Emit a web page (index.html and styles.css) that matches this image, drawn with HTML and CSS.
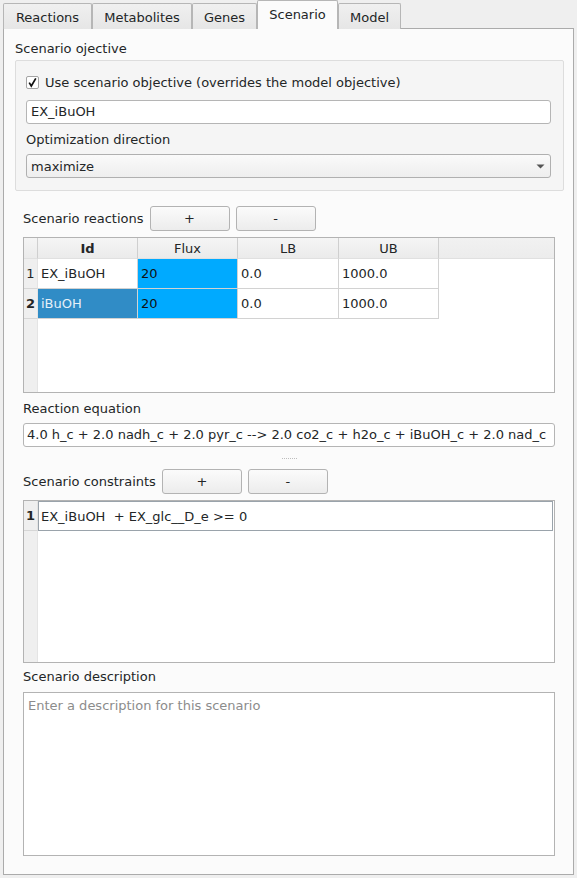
FILE: index.html
```html
<!DOCTYPE html>
<html>
<head>
<meta charset="utf-8">
<link rel="stylesheet" href="styles.css">
</head>
<body>
<div class="tabs">
  <div class="tab w-react">Reactions</div>
  <div class="tab w-meta">Metabolites</div>
  <div class="tab w-genes">Genes</div>
  <div class="tab tab-sel w-scen">Scenario</div>
  <div class="tab w-model">Model</div>
</div>
<div class="panel">
  <div class="gtitle">Scenario ojective</div>
  <div class="group">
    <div class="check">
      <span class="box"><svg width="11" height="11" viewBox="0 0 11 11"><path d="M2.2 5.6 L4.3 9 L8.8 1.4" fill="none" stroke="#111" stroke-width="1.7" stroke-linejoin="miter"/></svg></span>
      <span>Use scenario objective (overrides the model objective)</span>
    </div>
    <div class="input">EX_iBuOH</div>
    <div class="label">Optimization direction</div>
    <div class="combo"><span>maximize</span><svg width="9" height="5" viewBox="0 0 9 5"><path d="M0.5 0.5 H8.5 L4.5 4.5 Z" fill="#555"/></svg></div>
  </div>
  <div class="lower">
    <div class="btnrow">
      <span class="rowlabel">Scenario reactions</span>
      <div class="btn">+</div>
      <div class="btn">-</div>
    </div>
    <div class="table reactions">
      <div class="hc corner"></div>
      <div class="hc bold">Id</div>
      <div class="hc">Flux</div>
      <div class="hc">LB</div>
      <div class="hc">UB</div>
      <div class="hc fill"></div>

      <div class="rh">1</div>
      <div class="cell">EX_iBuOH</div>
      <div class="cell flux">20</div>
      <div class="cell">0.0</div>
      <div class="cell">1000.0</div>
      <div class="blank"></div>

      <div class="rh bold">2</div>
      <div class="cell selected">iBuOH</div>
      <div class="cell flux">20</div>
      <div class="cell">0.0</div>
      <div class="cell">1000.0</div>
      <div class="blank"></div>

      <div class="rh rfill"></div>
      <div class="blank span5"></div>
    </div>

    <div class="label sec">Reaction equation</div>
    <div class="input eq">4.0 h_c + 2.0 nadh_c + 2.0 pyr_c --&gt; 2.0 co2_c + h2o_c + iBuOH_c + 2.0 nad_c</div>
    <div class="splitter"><div class="dots"></div></div>

    <div class="btnrow">
      <span class="rowlabel">Scenario constraints</span>
      <div class="btn">+</div>
      <div class="btn">-</div>
    </div>
    <div class="table constraints">
      <div class="rh bold">1</div>
      <div class="cell focus">EX_iBuOH&nbsp; + EX_glc__D_e &gt;= 0</div>
      <div class="rh rfill"></div>
      <div class="blank"></div>
    </div>

    <div class="label desc">Scenario description</div>
    <div class="textarea"><span class="placeholder">Enter a description for this scenario</span></div>
  </div>
</div>
</body>
</html>
```
FILE: styles.css
```css
* { box-sizing: border-box; }
html, body { margin: 0; padding: 0; }
body {
  width: 577px;
  height: 878px;
  background: #efefef;
  font-family: "DejaVu Sans", "Noto Sans", sans-serif;
  font-size: 13px;
  color: #232627;
  overflow: hidden;
}
.tabs {
  display: flex;
  align-items: flex-end;
  height: 29px;
  padding-left: 3px;
  position: relative;
  z-index: 2;
}
.tab {
  height: 26px;
  border: 1px solid #b6b6b6;
  border-bottom: none;
  border-radius: 2px 2px 0 0;
  background: linear-gradient(#f0f0f0, #e6e6e6);
  display: flex;
  align-items: center;
  justify-content: center;
  padding-top: 1px;
}
.w-react { width: 89px; }
.w-meta { width: 100px; }
.w-genes { width: 65px; }
.w-scen { width: 81px; }
.w-model { width: 63px; }
.tab-sel {
  height: 29px;
  background: #fbfbfb;
  padding-top: 0;
  padding-bottom: 2px;
}
.panel {
  margin: -1px 0 0 3px;
  width: 571px;
  height: 847px;
  border: 1px solid #ababab;
  background: #fbfbfb;
  padding: 0 9px 0 11px;
  display: flex;
  flex-direction: column;
}
.gtitle {
  margin-top: 11px;
  line-height: 18px;
  height: 18px;
}
.group {
  margin-top: 2px;
  height: 131px;
  border: 1px solid #dddddd;
  border-radius: 2px;
  background: #f5f5f5;
  padding: 14px 12px 0 10px;
  display: flex;
  flex-direction: column;
}
.check {
  display: flex;
  align-items: center;
  height: 15px;
  gap: 6px;
}
.box {
  width: 13px;
  height: 13px;
  border: 1px solid #a4a4a4;
  border-radius: 2px;
  background: #fff;
  display: flex;
  align-items: center;
  justify-content: center;
}
.input {
  height: 24px;
  border: 1px solid #b5b5b5;
  border-radius: 3px;
  background: #fff;
  padding: 0 4px;
  line-height: 22px;
  white-space: nowrap;
  overflow: hidden;
}
.group .input { margin-top: 10px; }
.label {
  line-height: 18px;
  height: 18px;
}
.group .label { margin-top: 7px; }
.combo {
  margin-top: 5px;
  height: 24px;
  border: 1px solid #b0b0b0;
  border-radius: 3px;
  background: linear-gradient(#fafafa, #eeeeee);
  padding: 0 5px 0 4px;
  display: flex;
  align-items: center;
  justify-content: space-between;
}
.lower {
  padding: 0 9px 0 8px;
  display: flex;
  flex-direction: column;
}
.btnrow {
  display: flex;
  align-items: center;
  height: 25px;
  margin-top: 15px;
}
.rowlabel { margin-right: 6px; }
.btn {
  width: 80px;
  height: 25px;
  border: 1px solid #b3b3b3;
  border-radius: 3px;
  background: linear-gradient(#fbfbfb, #ececec);
  display: flex;
  align-items: center;
  justify-content: center;
}
.btn + .btn { margin-left: 6px; }
.table {
  margin-top: 6px;
  border: 1px solid #b3b3b3;
  background: #fff;
  display: grid;
}
.reactions {
  height: 156px;
  grid-template-columns: 14px 100px 100px 101px 100px 1fr;
  grid-template-rows: 21px 30px 30px 1fr;
}
.hc {
  background: linear-gradient(#f5f5f5, #ebebeb);
  border-right: 1px solid #cfcfcf;
  border-bottom: 1px solid #e0e0e0;
  display: flex;
  align-items: center;
  justify-content: center;
}
.hc.fill { border-right: none; background: linear-gradient(#f1f1f1, #ececec); }
.bold { font-weight: bold; }
.rh {
  background: #efefef;
  border-bottom: 1px solid #d6d6d6;
  border-right: 1px solid #e4e4e4;
  display: flex;
  align-items: center;
  justify-content: center;
}
.rh.rfill { border-bottom: none; }
.cell {
  border-right: 1px solid #d2d2d2;
  border-bottom: 1px solid #d2d2d2;
  display: flex;
  align-items: center;
  padding-left: 3px;
  white-space: nowrap;
}
.flux { background: #00aaff; color: #111; }
.selected { background: #308cc6; color: #e6f0f8; }
.blank { background: #fff; }
.span5 { grid-column: span 5; }
.sec { margin-top: 7px; }
.eq { margin-top: 5px; padding-left: 3px; }
.splitter {
  height: 22px;
  display: flex;
  align-items: center;
  justify-content: center;
}
.dots {
  width: 15px;
  border-top: 1px dotted #bdbdbd;
  margin-top: 1px;
}
.splitter + .btnrow { margin-top: 0; }
.constraints {
  height: 163px;
  grid-template-columns: 14px 1fr;
  grid-template-rows: 30px 1fr;
}
.focus {
  border: 1px solid #9aa3ab;
  margin-right: 1px;
  padding-left: 2px;
}
.desc { margin-top: 5px; }
.textarea {
  margin-top: 6px;
  height: 164px;
  border: 1px solid #b3b3b3;
  background: #fff;
  padding: 4px 4px;
  line-height: 18px;
}
.placeholder { color: #8c8c8c; }
```
